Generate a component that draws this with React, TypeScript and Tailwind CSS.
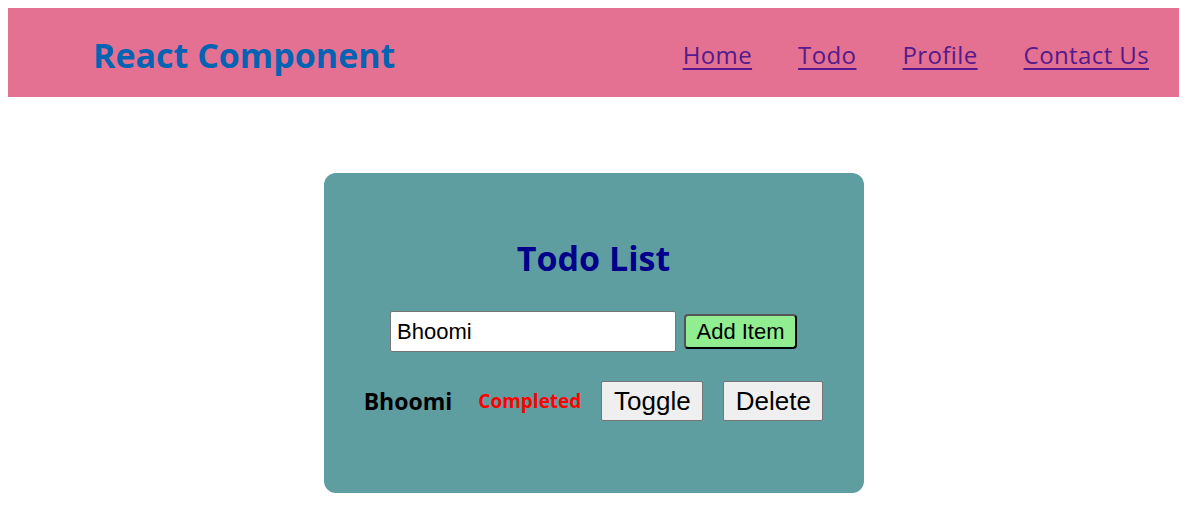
import React from "react";

export default function App() {
  return (
    <div className="min-h-[510px] bg-white p-2" style={{ fontFamily: '"Open Sans", "Noto Sans", sans-serif' }}>
      <header className="flex h-[89px] items-center justify-between bg-[#e47092] pl-[85px] pr-[30px] pt-[4px]">
        <h1 className="text-[34px] font-bold leading-[44px] text-[#0563b4]">React Component</h1>
        <nav className="flex items-center gap-[46px] text-[24px] tracking-[0.4px] text-[#551a8b]">
          <a href="#" className="underline underline-offset-[4px] decoration-[1.5px]">Home</a>
          <a href="#" className="underline underline-offset-[4px] decoration-[1.5px]">Todo</a>
          <a href="#" className="underline underline-offset-[4px] decoration-[1.5px]">Profile</a>
          <a href="#" className="underline underline-offset-[4px] decoration-[1.5px]">Contact Us</a>
        </nav>
      </header>
      <div className="flex justify-center pt-[76px]">
        <div className="flex h-[320px] w-[540px] flex-col items-center rounded-[12px] bg-[#5f9ea0] pt-[65px]">
          <h2 className="text-[34px] font-bold leading-[40px] text-[#00008b]">Todo List</h2>
          <div className="mt-[33px] flex items-center gap-[8px]" style={{ fontFamily: '"Liberation Sans", Arial, sans-serif' }}>
            <input
              defaultValue="Bhoomi"
              className="h-[41px] w-[286px] rounded-[2px] border border-[#767676] bg-white px-[6px] text-[22px] text-black outline-none"
            />
            <button className="h-[35px] w-[113px] rounded-[4px] border-2 border-[#555] border-b-black border-r-black bg-[#90ee90] text-[22px] leading-none text-black">
              Add Item
            </button>
          </div>
          <div className="mt-[29px] flex items-center">
            <span className="text-[23px] font-bold text-black">Bhoomi</span>
            <span className="ml-[26px] text-[19px] font-bold text-[#ff0000]">Completed</span>
            <button
              className="ml-[20px] h-[40px] w-[102px] rounded-[2px] border border-[#767676] bg-[#efefef] text-[26px] leading-none text-black"
              style={{ fontFamily: '"Liberation Sans", Arial, sans-serif' }}
            >
              Toggle
            </button>
            <button
              className="ml-[20px] h-[40px] w-[100px] rounded-[2px] border border-[#767676] bg-[#efefef] text-[26px] leading-none text-black"
              style={{ fontFamily: '"Liberation Sans", Arial, sans-serif' }}
            >
              Delete
            </button>
          </div>
        </div>
      </div>
    </div>
  );
}
